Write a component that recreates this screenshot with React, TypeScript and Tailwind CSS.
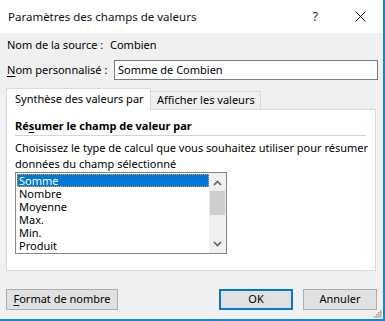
import React from "react";

const font = { fontFamily: '"Noto Sans", "DejaVu Sans", sans-serif' };

function Grip() {
  const dots = [
    [7, 1],
    [5, 3], [7, 3],
    [3, 5], [5, 5], [7, 5],
    [1, 7], [3, 7], [5, 7], [7, 7],
  ];
  return (
    <svg width="9" height="9" viewBox="0 0 9 9" className="absolute right-[1px] bottom-[1px]">
      {dots.map(([x, y], i) => (
        <rect key={i} x={x} y={y} width="1.5" height="1.5" fill="#9a9a9a" />
      ))}
    </svg>
  );
}

export default function App() {
  const items = ["Somme", "Nombre", "Moyenne", "Max.", "Min.", "Produit"];
  return (
    <div
      className="relative w-[385px] h-[321px] bg-[#f0f0f0] border-r-2 border-b-2 border-[#1883d7] text-[11px] text-black flex flex-col"
      style={font}
    >
      {/* title bar */}
      <div className="h-[33px] bg-white flex items-center shrink-0">
        <span className="ml-[8px] text-[11.5px] text-[#111]">Paramètres des champs de valeurs</span>
        <span className="ml-auto text-[12px] text-[#222] mr-[37px]">?</span>
        <svg width="11" height="11" viewBox="0 0 11 11" className="mr-[17px]">
          <path d="M0.5 0.5 L10.5 10.5 M10.5 0.5 L0.5 10.5" stroke="#111" strokeWidth="1" />
        </svg>
      </div>

      {/* source row */}
      <div className="mt-[4px] h-[16px] flex items-center pl-[7px]">
        <span className="w-[103px]">Nom de la source :</span>
        <span>Combien</span>
      </div>

      {/* custom name row */}
      <div className="mt-[7px] h-[20px] flex items-center pl-[7px]">
        <span className="w-[107px]">
          <u className="underline-offset-2">N</u>om personnalisé :
        </span>
        <div className="w-[264px] h-[20px] border border-[#7a7a7a] bg-white flex items-center pl-[3px]">
          Somme de Combien
        </div>
      </div>

      {/* tabs */}
      <div className="mt-[8px] ml-[6px] flex items-end h-[21px]">
        <div className="relative z-10 w-[145px] h-[22px] mb-[-1px] bg-white border-t border-l border-r border-[#d9d9d9] flex items-center pl-[8px] pb-[1px]">
          Synthèse des valeurs par
        </div>
        <div className="w-[110px] h-[18px] bg-[#f0f0f0] border-t border-r border-[#d9d9d9] flex items-center pl-[6px]">
          Afficher les valeurs
        </div>
      </div>

      {/* panel */}
      <div className="ml-[6px] w-[370px] h-[162px] bg-white border border-[#d9d9d9] pl-[8px]">
        <div className="mt-[8px] h-[16px] flex items-center font-bold">
          Ré<u className="underline-offset-2">s</u>umer le champ de valeur par
        </div>
        <div className="mt-[1px] w-[351px] h-[1px] bg-[#d5d5d5]" />
        <div className="mt-[4px] leading-[16px]">
          <div className="h-[16px] whitespace-nowrap">Choisissez le type de calcul que vous souhaitez utiliser pour résumer</div>
          <div className="h-[16px]">données du champ sélectionné</div>
        </div>
        <div className="w-[212px] h-[82px] border border-[#828790] bg-white flex">
          <div className="flex-1 pt-[1px] pl-[1px] overflow-hidden">
            {items.map((it, i) => (
              <div
                key={it}
                className={
                  i === 0
                    ? "h-[13px] leading-[11px] pl-[1px] bg-[#0078d7] text-white border border-dotted border-[#f5a040] overflow-hidden"
                    : "h-[13px] leading-[13px] pl-[2px] text-black overflow-hidden"
                }
              >
                {it}
              </div>
            ))}
          </div>
          <div className="w-[17px] bg-[#f0f0f0] flex flex-col items-center">
            <svg width="9" height="6" viewBox="0 0 9 6" className="mt-[7px]">
              <path d="M1 5 L4.5 1.5 L8 5" stroke="#606060" strokeWidth="1.6" fill="none" />
            </svg>
            <div className="mt-[5px] w-[15px] h-[24px] bg-[#cdcdcd]" />
            <div className="flex-1" />
            <svg width="9" height="6" viewBox="0 0 9 6" className="mb-[6px]">
              <path d="M1 1 L4.5 4.5 L8 1" stroke="#606060" strokeWidth="1.6" fill="none" />
            </svg>
          </div>
        </div>
      </div>

      {/* buttons */}
      <div className="mt-[18px] flex pl-[6px]">
        <div className="w-[112px] h-[21px] bg-[#e1e1e1] border border-[#adadad] flex items-center justify-center">
          <span>
            <u className="underline-offset-2">F</u>ormat de nombre
          </span>
        </div>
        <div className="ml-[101px] w-[74px] h-[21px] bg-[#e1e1e1] border-2 border-[#0078d7] flex items-center justify-center">
          OK
        </div>
        <div className="ml-[10px] w-[74px] h-[21px] bg-[#e1e1e1] border border-[#adadad] flex items-center justify-center">
          Annuler
        </div>
      </div>

      <Grip />
    </div>
  );
}
